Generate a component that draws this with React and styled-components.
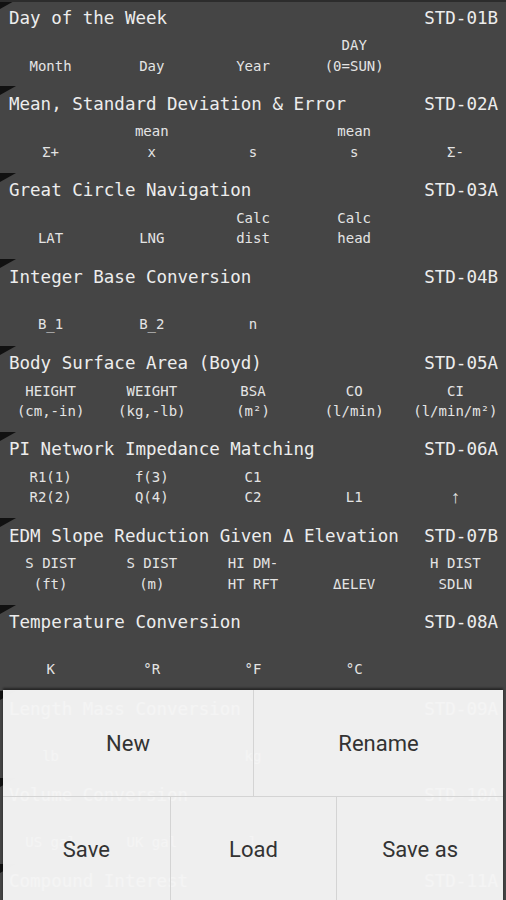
import React from "react";
import styled, { createGlobalStyle } from "styled-components";

const Global = createGlobalStyle`
  html, body { margin: 0; padding: 0; background: #454545; }
  body { overflow: hidden; }
`;

const Page = styled.div`
  width: 506px;
  height: 900px;
  background: #454545;
  border-top: 2px solid #2c2c2c;
  box-sizing: border-box;
  overflow: hidden;
  position: relative;
  font-family: "DejaVu Sans Mono", "Liberation Mono", monospace;
`;

const List = styled.div`
  display: flex;
  flex-direction: column;
  margin-top: -2px;
`;

const Row = styled.div`
  position: relative;
  height: 86.4px;
  flex: none;
  display: flex;
  flex-direction: column;
  box-sizing: border-box;
`;

const Corner = styled.div`
  position: absolute;
  left: 0;
  top: 0;
  width: 0;
  height: 0;
  border-top: 9px solid #111;
  border-right: 16px solid transparent;
`;

const Header = styled.div`
  height: 35px;
  display: flex;
  align-items: center;
  justify-content: space-between;
  padding: 0 8px 0 9px;
  color: #ededed;
  font-size: 17.5px;
  white-space: pre;
`;

const Labels = styled.div`
  display: grid;
  grid-template-columns: repeat(5, 1fr);
  align-items: end;
  height: 40px;
`;

const Label = styled.div`
  text-align: center;
  color: #e4e4e4;
  font-family: ${(p) => (p.$big ? '"Liberation Sans", sans-serif' : "inherit")};
  font-size: ${(p) => (p.$big ? "18px" : "14px")};
  line-height: 20.5px;
  white-space: pre;
`;

const Menu = styled.div`
  position: absolute;
  left: 3px;
  right: 3px;
  top: 688px;
  height: 216px;
  background: rgba(244, 244, 244, 0.975);
  box-shadow: 0 -2px 2px rgba(0, 0, 0, 0.45);
  display: grid;
  grid-template-rows: 106px 110px;
  font-family: Roboto, "Noto Sans", sans-serif;
`;

const MenuRow = styled.div`
  display: grid;
  grid-template-columns: repeat(${(p) => p.$cols}, 1fr);
  border-top: ${(p) => (p.$first ? "none" : "1px solid #d4d4d4")};
`;

const MenuItem = styled.div`
  display: flex;
  align-items: center;
  justify-content: center;
  color: #333;
  font-size: 22px;
  padding-bottom: ${(p) => (p.$low ? "4px" : "0")};
  border-left: ${(p) => (p.$first ? "none" : "1px solid #d4d4d4")};
`;

const rows = [
  { t: "Day of the Week", c: "STD-01B", l: [["", "Month"], ["", "Day"], ["", "Year"], ["DAY", "(0=SUN)"]] },
  { t: "Mean, Standard Deviation & Error", c: "STD-02A", l: [["", "Σ+"], ["mean", "x"], ["", "s"], ["mean", "s"], ["", "Σ-"]] },
  { t: "Great Circle Navigation", c: "STD-03A", l: [["", "LAT"], ["", "LNG"], ["Calc", "dist"], ["Calc", "head"]] },
  { t: "Integer Base Conversion", c: "STD-04B", l: [["", "B_1"], ["", "B_2"], ["", "n"]] },
  { t: "Body Surface Area (Boyd)", c: "STD-05A", l: [["HEIGHT", "(cm,-in)"], ["WEIGHT", "(kg,-lb)"], ["BSA", "(m²)"], ["CO", "(l/min)"], ["CI", "(l/min/m²)"]] },
  { t: "PI Network Impedance Matching", c: "STD-06A", l: [["R1(1)", "R2(2)"], ["f(3)", "Q(4)"], ["C1", "C2"], ["", "L1"], ["", "↑", true]] },
  { t: "EDM Slope Reduction Given Δ Elevation", c: "STD-07B", l: [["S DIST", "(ft)"], ["S DIST", "(m)"], ["HI DM-", "HT RFT"], ["", "ΔELEV"], ["H DIST", "SDLN"]] },
  { t: "Temperature Conversion", c: "STD-08A", l: [["", "K"], ["", "°R"], ["", "°F"], ["", "°C"]] },
  { t: "Length Mass Conversion", c: "STD-09A", l: [["", "lb"], ["", ""], ["", "kg"]] },
  { t: "Volume Conversion", c: "STD-10A", l: [["", "US gal"], ["", "UK gal"], ["", "l"]] },
  { t: "Compound Interest", c: "STD-11A", l: [] },
];

export default function App() {
  return (
    <>
      <Global />
      <Page>
        <List>
          {rows.map((r) => (
            <Row key={r.c}>
              <Corner />
              <Header>
                <span>{r.t}</span>
                <span>{r.c}</span>
              </Header>
              <Labels>
                {r.l.map((lab, i) => (
                  <Label key={i} $big={lab[2]}>
                    {lab[0] ? lab[0] + "\n" + lab[1] : lab[1]}
                  </Label>
                ))}
              </Labels>
            </Row>
          ))}
        </List>
        <Menu>
          <MenuRow $cols={2} $first>
            <MenuItem $first>New</MenuItem>
            <MenuItem>Rename</MenuItem>
          </MenuRow>
          <MenuRow $cols={3}>
            <MenuItem $first $low>Save</MenuItem>
            <MenuItem $low>Load</MenuItem>
            <MenuItem $low>Save as</MenuItem>
          </MenuRow>
        </Menu>
      </Page>
    </>
  );
}
